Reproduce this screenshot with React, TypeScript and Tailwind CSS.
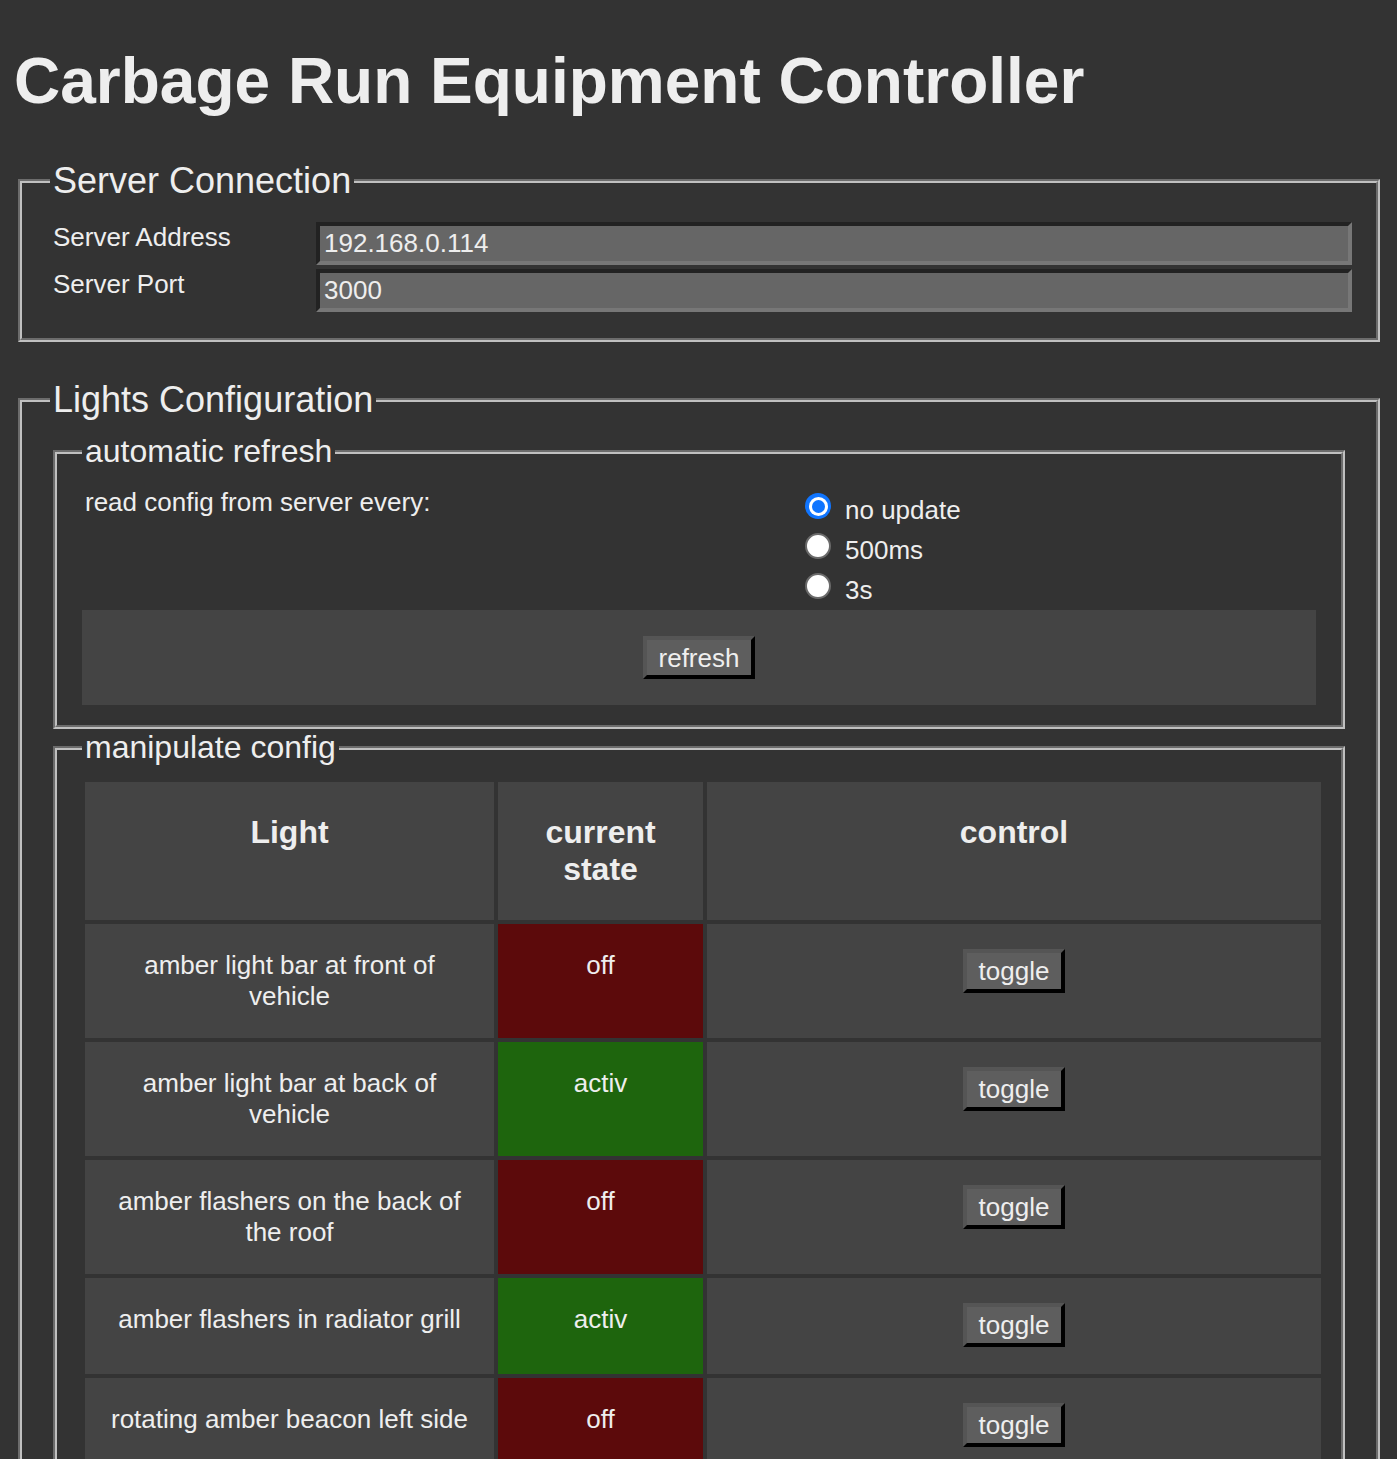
import React from "react";

const rows = [
  { name: "amber light bar at front of vehicle", on: false },
  { name: "amber light bar at back of vehicle", on: true },
  { name: "amber flashers on the back of the roof", on: false },
  { name: "amber flashers in radiator grill", on: true },
  { name: "rotating amber beacon left side", on: false },
];

function Radio({ checked, label }: { checked: boolean; label: string }) {
  return (
    <div className="flex h-[40px] items-start">
      {checked ? (
        <div className="mt-[6px] flex h-[26px] w-[26px] items-center justify-center rounded-full bg-[#1075ff]">
          <div className="flex h-[19px] w-[19px] items-center justify-center rounded-full bg-white">
            <div className="h-[13px] w-[13px] rounded-full bg-[#1075ff]" />
          </div>
        </div>
      ) : (
        <div className="mt-[6px] h-[26px] w-[26px] rounded-full border-2 border-[#6a6a6a] bg-white" />
      )}
      <span className="ml-[14px] pt-[3px] text-[26px] leading-[40px]">{label}</span>
    </div>
  );
}

function Btn({ children, h }: { children: React.ReactNode; h: string }) {
  return (
    <button
      type="button"
      className={`${h} border-4 border-t-[#555555] border-l-[#555555] border-r-black border-b-black bg-[#5e5e5e] px-[12px] text-[26px] leading-[30px] text-[#eeeeee]`}
    >
      {children}
    </button>
  );
}

export default function App() {
  return (
    <div className="h-[1459px] overflow-hidden bg-[#333333] text-[#eeeeee] font-['Liberation_Sans',Arial,sans-serif]">
      <h1 className="m-0 pt-[45px] pb-[43px] pl-[14px] text-[64px] font-bold leading-[72px]">
        Carbage Run Equipment Controller
      </h1>

      <fieldset className="ml-[18px] mr-[17px] min-w-0 border-4 border-[#c0c0c0] [border-style:groove] pl-[28px] pr-[24px] pt-[21px] pb-[26px]">
        <legend className="px-[3px] text-[36px] leading-[41px]">Server Connection</legend>
        <div className="grid grid-cols-[266px_1036px] gap-y-[4px]">
          <div className="pl-[3px] text-[26px] leading-[30px]">Server Address</div>
          <input
            readOnly
            defaultValue="192.168.0.114"
            className="h-[43px] w-full border-4 border-t-[#222222] border-l-[#222222] border-b-[#777777] border-r-[#777777] bg-[#666666] px-[4px] text-[26px] leading-[30px] text-[#eeeeee] outline-none"
          />
          <div className="pl-[3px] text-[26px] leading-[30px]">Server Port</div>
          <input
            readOnly
            defaultValue="3000"
            className="h-[43px] w-full border-4 border-t-[#222222] border-l-[#222222] border-b-[#777777] border-r-[#777777] bg-[#666666] px-[4px] text-[26px] leading-[30px] text-[#eeeeee] outline-none"
          />
        </div>
      </fieldset>

      <fieldset className="mt-[37px] ml-[18px] mr-[17px] min-w-0 border-4 border-[#c0c0c0] [border-style:groove] pl-[28px] pr-[24px] pt-[13px] pb-[27px]">
        <legend className="px-[3px] text-[36px] leading-[41px]">Lights Configuration</legend>

        <fieldset className="ml-[3px] mr-[7px] min-w-0 border-4 border-[#c0c0c0] [border-style:groove] px-[25px] pt-[17px] pb-[20px]">
          <legend className="px-[3px] text-[32px] leading-[37px]">automatic refresh</legend>
          <div className="flex">
            <div className="w-[723px] pl-[3px] text-[26px] leading-[30px]">read config from server every:</div>
            <div className="flex flex-col">
              <Radio checked label="no update" />
              <Radio checked={false} label="500ms" />
              <Radio checked={false} label="3s" />
            </div>
          </div>
          <div className="mt-[3px] flex h-[95px] items-center justify-center bg-[#444444]">
            <Btn h="h-[43px]">refresh</Btn>
          </div>
        </fieldset>

        <fieldset className="ml-[3px] mr-[7px] min-w-0 border-4 border-[#c0c0c0] [border-style:groove] px-[25px] pt-[16px] pb-[20px]">
          <legend className="px-[3px] text-[32px] leading-[37px]">manipulate config</legend>
          <div className="ml-[3px] grid w-[1236px] grid-cols-[409px_205px_614px] gap-[4px]">
            <div className="bg-[#444444] px-[24px] py-[32px] text-center text-[32px] font-bold leading-[37px]">Light</div>
            <div className="bg-[#444444] px-[24px] py-[32px] text-center text-[32px] font-bold leading-[37px]">current state</div>
            <div className="bg-[#444444] px-[24px] py-[32px] text-center text-[32px] font-bold leading-[37px]">control</div>
            {rows.map((r) => (
              <React.Fragment key={r.name}>
                <div className="bg-[#444444] px-[24px] pt-[26px] pb-[26px] text-center text-[26px] leading-[31px]">{r.name}</div>
                <div
                  className={`${r.on ? "bg-[#1e650d]" : "bg-[#5c0a0b]"} px-[24px] pt-[26px] pb-[26px] text-center text-[26px] leading-[31px]`}
                >
                  {r.on ? "activ" : "off"}
                </div>
                <div className="flex justify-center bg-[#444444] px-[24px] pt-[25px] pb-[27px]">
                  <div>
                    <Btn h="h-[44px]">toggle</Btn>
                  </div>
                </div>
              </React.Fragment>
            ))}
          </div>
        </fieldset>
      </fieldset>
    </div>
  );
}
